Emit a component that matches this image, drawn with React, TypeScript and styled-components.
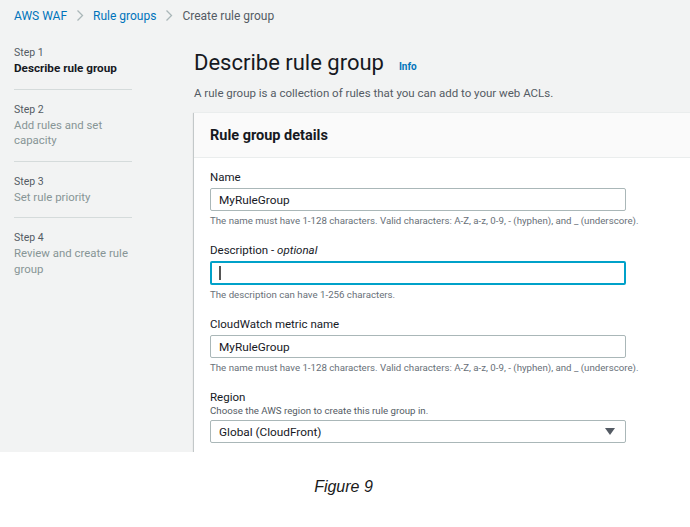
import React from "react";
import styled, { createGlobalStyle } from "styled-components";

const Global = createGlobalStyle`
  html, body { margin: 0; padding: 0; background: #ffffff; }
  body { font-family: Roboto, "Noto Sans", sans-serif; -webkit-font-smoothing: antialiased; }
  * { box-sizing: border-box; }
`;

const Page = styled.div`
  width: 690px;
  height: 527px;
  background: #ffffff;
  display: flex;
  flex-direction: column;
  overflow: hidden;
`;

const Shot = styled.div`
  height: 452px;
  background: #f2f3f3;
  overflow: hidden;
  display: flex;
  flex-direction: column;
`;

const Breadcrumbs = styled.nav`
  display: flex;
  align-items: center;
  height: 31px;
  padding: 0 0 0 14px;
  font-size: 12px;
  gap: 9px;
`;

const Crumb = styled.span<{ $link?: boolean }>`
  color: ${(p) => (p.$link ? "#0073bb" : "#545b64")};
`;

const Chevron = () => (
  <svg width="8" height="13" viewBox="0 0 8 13">
    <polyline points="1.5,1.5 6.5,6.5 1.5,11.5" fill="none" stroke="#aab7b8" strokeWidth="1.3" />
  </svg>
);

const Body = styled.div`
  display: flex;
  flex: 1;
`;

const Sidebar = styled.ol`
  list-style: none;
  margin: 0;
  padding: 14px 0 0 14px;
  width: 194px;
  flex: none;
`;

const Step = styled.li<{ $last?: boolean }>`
  width: 118px;
  padding: 0 0 12px;
  margin-bottom: 12px;
  border-bottom: ${(p) => (p.$last ? "none" : "1px solid #d5dbdb")};
`;

const StepNum = styled.div`
  font-size: 10.5px;
  line-height: 16px;
  color: #545b64;
`;

const StepTitle = styled.div<{ $active?: boolean }>`
  font-size: ${(p) => (p.$active ? 11.7 : 11.4)}px;
  line-height: 15.5px;
  color: ${(p) => (p.$active ? "#16191f" : "#879596")};
  font-weight: ${(p) => (p.$active ? 700 : 400)};
`;

const Main = styled.div`
  flex: 1;
  padding-top: 17px;
  display: flex;
  flex-direction: column;
`;

const TitleRow = styled.div`
  display: flex;
  align-items: baseline;
  gap: 15px;
`;

const Title = styled.h1`
  margin: 0;
  font-size: 22px;
  font-weight: 400;
  line-height: 30px;
  color: #16191f;
`;

const Info = styled.span`
  font-size: 10px;
  font-weight: 700;
  color: #0073bb;
`;

const Subtitle = styled.p`
  margin: 6px 0 0;
  font-size: 11.5px;
  line-height: 18px;
  color: #545b64;
`;

const Card = styled.section`
  margin-top: 10px;
  width: 560px;
  background: #ffffff;
  box-shadow: 0 1px 1px 0 rgba(0, 28, 36, 0.3), 1px 1px 1px 0 rgba(0, 28, 36, 0.15),
    -1px 1px 1px 0 rgba(0, 28, 36, 0.15);
  border-top: 1px solid #eaeded;
  flex: 1;
`;

const CardHeader = styled.header`
  height: 45px;
  background: #fafafa;
  border-bottom: 1px solid #eaeded;
  display: flex;
  align-items: center;
  padding-left: 16px;
  font-size: 14.5px;
  font-weight: 700;
  color: #16191f;
`;

const CardBody = styled.div`
  padding: 11px 16px 0;
  display: flex;
  flex-direction: column;
  gap: 15px;
`;

const Field = styled.div`
  display: flex;
  flex-direction: column;
`;

const Label = styled.label`
  font-size: 11.5px;
  line-height: 16px;
  color: #16191f;
  em { font-style: italic; }
`;

const Desc = styled.div`
  font-size: 9.7px;
  line-height: 12px;
  color: #545b64;
`;

const Input = styled.div<{ $focus?: boolean }>`
  margin-top: 3px;
  width: 416px;
  height: ${(p) => (p.$focus ? 24 : 23)}px;
  border: ${(p) => (p.$focus ? "2px solid #00a1c9" : "1px solid #aab7b8")};
  border-radius: 2px;
  background: #fff;
  display: flex;
  align-items: center;
  padding-left: ${(p) => (p.$focus ? 7 : 8)}px;
  font-size: 11.8px;
  color: #16191f;
`;

const Caret = styled.span`
  width: 1.5px;
  height: 14px;
  background: #555;
`;

const Hint = styled.div`
  margin-top: 3px;
  font-size: 9.7px;
  line-height: 13px;
  color: #687078;
`;

const SelectBox = styled(Input)`
  justify-content: space-between;
  padding-right: 10px;
`;

const Arrow = () => (
  <svg width="10" height="7" viewBox="0 0 10 7">
    <polygon points="0,0 10,0 5,7" fill="#545b64" />
  </svg>
);

const Caption = styled.div`
  flex: 1;
  display: flex;
  justify-content: center;
  padding-top: 26px;
  padding-right: 3px;
  font-family: "Liberation Sans", Arial, sans-serif;
  font-style: italic;
  font-size: 16px;
  color: #1a1a1a;
`;

const steps = [
  { n: "Step 1", t: "Describe rule group", active: true },
  { n: "Step 2", t: "Add rules and set capacity" },
  { n: "Step 3", t: "Set rule priority" },
  { n: "Step 4", t: "Review and create rule group" },
];

const NAME_HINT =
  "The name must have 1-128 characters. Valid characters: A-Z, a-z, 0-9, - (hyphen), and _ (underscore).";

export default function App() {
  return (
    <Page>
      <Global />
      <Shot>
        <Breadcrumbs>
          <Crumb $link>AWS WAF</Crumb>
          <Chevron />
          <Crumb $link>Rule groups</Crumb>
          <Chevron />
          <Crumb>Create rule group</Crumb>
        </Breadcrumbs>
        <Body>
          <Sidebar>
            {steps.map((s, i) => (
              <Step key={s.n} $last={i === steps.length - 1}>
                <StepNum>{s.n}</StepNum>
                <StepTitle $active={s.active}>{s.t}</StepTitle>
              </Step>
            ))}
          </Sidebar>
          <Main>
            <TitleRow>
              <Title>Describe rule group</Title>
              <Info>Info</Info>
            </TitleRow>
            <Subtitle>A rule group is a collection of rules that you can add to your web ACLs.</Subtitle>
            <Card>
              <CardHeader>Rule group details</CardHeader>
              <CardBody>
                <Field>
                  <Label>Name</Label>
                  <Input>MyRuleGroup</Input>
                  <Hint>{NAME_HINT}</Hint>
                </Field>
                <Field>
                  <Label>
                    Description - <em>optional</em>
                  </Label>
                  <Input $focus>
                    <Caret />
                  </Input>
                  <Hint>The description can have 1-256 characters.</Hint>
                </Field>
                <Field>
                  <Label>CloudWatch metric name</Label>
                  <Input>MyRuleGroup</Input>
                  <Hint>{NAME_HINT}</Hint>
                </Field>
                <Field>
                  <Label>Region</Label>
                  <Desc>Choose the AWS region to create this rule group in.</Desc>
                  <SelectBox>
                    Global (CloudFront)
                    <Arrow />
                  </SelectBox>
                </Field>
              </CardBody>
            </Card>
          </Main>
        </Body>
      </Shot>
      <Caption>Figure 9</Caption>
    </Page>
  );
}
